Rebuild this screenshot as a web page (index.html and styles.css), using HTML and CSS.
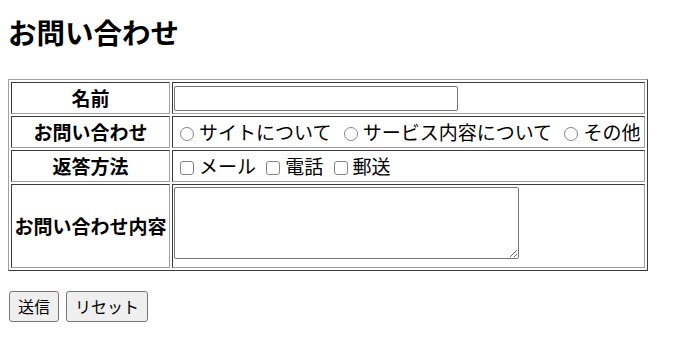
FILE: index.html
```html
<!DOCTYPE html>
<html lang="ja">
<head>
<meta charset="utf-8">
<title>お問い合わせ</title>
<link rel="stylesheet" href="styles.css">
</head>
<body>
<h1 class="title">お問い合わせ</h1>
<form class="form">
  <table class="grid">
    <tr>
      <th class="label">名前</th>
      <td class="field"><input class="text" type="text"></td>
    </tr>
    <tr>
      <th class="label">お問い合わせ</th>
      <td class="field field-radio"><input class="radio" type="radio" name="kind">サイトについて <input class="radio" type="radio" name="kind">サービス内容について <input class="radio" type="radio" name="kind">その他</td>
    </tr>
    <tr>
      <th class="label">返答方法</th>
      <td class="field"><input class="check" type="checkbox">メール <input class="check" type="checkbox">電話 <input class="check" type="checkbox">郵送</td>
    </tr>
    <tr>
      <th class="label">お問い合わせ内容</th>
      <td class="field field-top"><textarea class="area"></textarea></td>
    </tr>
  </table>
  <div class="actions">
    <button class="btn" type="submit">送信</button>
    <button class="btn" type="reset">リセット</button>
  </div>
</form>
</body>
</html>
```
FILE: styles.css
```css
html, body {
  margin: 0;
  padding: 0;
}
body {
  padding: 8px;
  font-family: "Noto Sans CJK JP", "Noto Sans", sans-serif;
  color: #000;
  background: #fff;
}
.title {
  margin: 4px 0 27px 0;
  font-size: 28.5px;
  line-height: 40px;
  font-weight: bold;
}
.form {
  margin: 0;
}
.grid {
  width: 640px;
  border-collapse: separate;
  border-spacing: 2px;
  border: 1px solid;
  border-color: #a0a0a0 #3a3a3a #3a3a3a #a0a0a0;
}
.label, .field {
  border: 1px solid;
  border-color: #3a3a3a #a0a0a0 #a0a0a0 #3a3a3a;
  padding: 1px;
  line-height: 28px;
  vertical-align: middle;
}
.label {
  width: 155px;
  font-size: 19px;
  font-weight: bold;
  text-align: center;
  white-space: nowrap;
}
.field {
  font-size: 19px;
  text-align: left;
  white-space: nowrap;
}
.field-radio {
  word-spacing: 2px;
}
.field-top {
  vertical-align: top;
}
.text {
  display: block;
  box-sizing: border-box;
  width: 284px;
  height: 25px;
  margin: 2px 0 1px 0;
  border: 1px solid #767676;
  border-radius: 2px;
  font: inherit;
  font-size: 16px;
  padding: 0 2px;
}
.radio, .check {
  appearance: none;
  -webkit-appearance: none;
  box-sizing: border-box;
  width: 14px;
  height: 14px;
  margin: 0 5px 0 6px;
  border: 1px solid #858585;
  background: #fff;
  vertical-align: -1px;
}
.radio {
  border-radius: 50%;
}
.check {
  border-radius: 3px;
}
.area {
  display: block;
  box-sizing: border-box;
  width: 345px;
  height: 72px;
  margin: 1px 0 7px 0;
  border: 1px solid #767676;
  border-radius: 2px;
  font: inherit;
  font-size: 16px;
  padding: 2px;
}
.actions {
  display: flex;
  gap: 7px;
  margin: 20px 0 0 1px;
}
.btn {
  box-sizing: border-box;
  height: 31px;
  padding: 0 8px;
  font-family: "Noto Sans CJK JP", "Noto Sans", sans-serif;
  font-size: 16px;
  line-height: 29px;
  color: #000;
  background: #efefef;
  border: 1px solid #767676;
  border-radius: 3px;
}
```
